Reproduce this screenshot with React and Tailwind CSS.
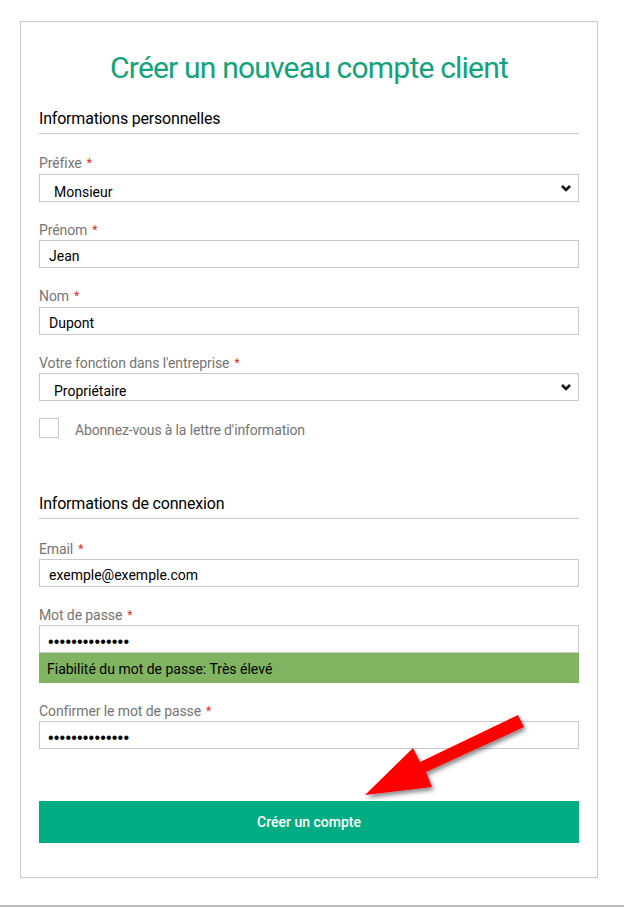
import React from "react";

const Req = () => <span className="text-[#e02b27] ml-[5px] text-[12px] leading-[18px]">*</span>;

function Label({ children }) {
  return (
    <div className="h-[18px] pt-[1px] flex items-start text-[14px] leading-[18px] text-[#757575] tracking-[-0.1px]">
      <span>{children}</span>
      <Req />
    </div>
  );
}

function Field({ children, select, dots }) {
  return (
    <div className="h-[28px] border border-[#c8c8c8] flex items-center justify-between bg-white">
      <span
        className={
          select
            ? "pl-[14px] pt-[7px] text-[14px] leading-[18px] text-black"
            : dots
            ? "pl-[8px] pt-[5px] text-[16px] leading-[18px] text-black font-['Liberation_Sans',sans-serif] tracking-[0.2px]"
            : "pl-[9px] pt-[3px] text-[14px] leading-[18px] text-black"
        }
      >
        {children}
      </span>
      {select && (
        <svg width="12" height="10" viewBox="0 0 12 10" className="mr-[6px]">
          <path d="M2 3 L6 7 L10 3" fill="none" stroke="#111" strokeWidth="2.6" />
        </svg>
      )}
    </div>
  );
}

export default function App() {
  return (
    <div className="relative w-[624px] h-[907px] bg-white font-['Roboto',sans-serif] overflow-hidden">
      <div className="pt-[21px] pl-[20px]">
        <div className="w-[578px] h-[857px] border border-[#c8c8c8] px-[18px]">
          <h1 className="mt-[28px] h-[36px] text-center text-[30px] leading-[36px] text-[#12a37d] tracking-[-0.8px]">
            Créer un nouveau compte client
          </h1>

          <div className="mt-[22px] h-[26px] pt-[1px] text-[16px] leading-[20px] text-black pb-[4px] border-b border-[#c8c8c8] tracking-[-0.2px]">
            Informations personnelles
          </div>

          <div className="mt-[19px]">
            <Label>Préfixe</Label>
            <div className="mt-[3px]">
              <Field select>Monsieur</Field>
            </div>
          </div>

          <div className="mt-[18px]">
            <Label>Prénom</Label>
            <div className="mt-[2px]">
              <Field>Jean</Field>
            </div>
          </div>

          <div className="mt-[18px]">
            <Label>Nom</Label>
            <div className="mt-[3px]">
              <Field>Dupont</Field>
            </div>
          </div>

          <div className="mt-[18px]">
            <Label>Votre fonction dans l'entreprise</Label>
            <div className="mt-[2px]">
              <Field select>Propriétaire</Field>
            </div>
          </div>

          <div className="mt-[17px] h-[20px] flex items-center">
            <div className="w-[20px] h-[20px] border border-[#c8c8c8] shrink-0" />
            <span className="ml-[16px] text-[14px] leading-[18px] text-[#757575] pt-[4px] tracking-[-0.15px]">
              Abonnez-vous à la lettre d'information
            </span>
          </div>

          <div className="mt-[55px] h-[26px] pt-[1px] text-[16px] leading-[20px] text-black pb-[4px] border-b border-[#c8c8c8] tracking-[-0.2px]">
            Informations de connexion
          </div>

          <div className="mt-[20px]">
            <Label>Email</Label>
            <div className="mt-[2px]">
              <Field>exemple@exemple.com</Field>
            </div>
          </div>

          <div className="mt-[18px]">
            <Label>Mot de passe</Label>
            <div className="mt-[2px]">
              <Field dots>••••••••••••••</Field>
            </div>
            <div className="h-[30px] bg-[#80b461] flex items-center pl-[8px] pt-[2px] text-[14px] leading-[18px] text-black">
              Fiabilité du mot de passe: Très élevé
            </div>
          </div>

          <div className="mt-[18px]">
            <Label>Confirmer le mot de passe</Label>
            <div className="mt-[2px]">
              <Field dots>••••••••••••••</Field>
            </div>
          </div>

          <button className="mt-[52px] w-full h-[42px] bg-[#00ac82] text-white text-[14px] leading-[18px] font-medium flex items-center justify-center">
            Créer un compte
          </button>
        </div>
      </div>

      <div className="absolute left-0 right-0 top-[905px] h-[2px] bg-[#bcbcbc]" />

      <svg className="absolute left-0 top-0 pointer-events-none" width="624" height="907">
        <defs>
          <filter id="sh" x="-20%" y="-20%" width="140%" height="140%">
            <feDropShadow dx="2" dy="3" stdDeviation="2" floodColor="#000" floodOpacity="0.45" />
          </filter>
        </defs>
        <polygon
          points="365,795 413,748 420,762 518,715 524,727 426,772 432,787"
          fill="#ff0000"
          filter="url(#sh)"
        />
      </svg>
    </div>
  );
}
